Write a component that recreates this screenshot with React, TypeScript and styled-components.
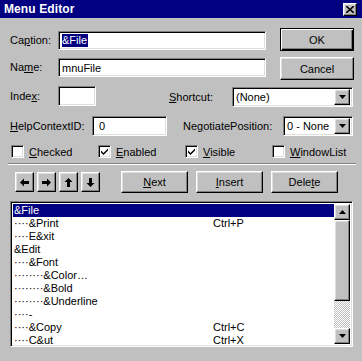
import React from 'react';
import styled, { createGlobalStyle, css } from 'styled-components';

const Global = createGlobalStyle`
  html, body { margin: 0; padding: 0; background: #c0c0c0; }
  body { font-family: "Liberation Sans", Arial, sans-serif; font-size: 11px; color: #000; }
  * { box-sizing: border-box; }
`;

const Win = styled.div`
  width: 362px;
  height: 361px;
  background: #c0c0c0;
  display: flex;
  flex-direction: column;
  overflow: hidden;
`;

const TitleBar = styled.div`
  height: 18px;
  flex: 0 0 18px;
  background: #000080;
  display: flex;
  align-items: center;
  justify-content: space-between;
  padding: 0 5px 0 4px;
`;

const Title = styled.span`
  color: #fff;
  font-weight: bold;
  font-size: 12px;
  letter-spacing: 0.1px;
`;

const raised = css`
  background: #c0c0c0;
  border: 1px solid;
  border-color: #fff #000 #000 #fff;
  box-shadow: inset -1px -1px #808080, inset 1px 1px #dfdfdf;
`;

const sunken = css`
  background: #fff;
  border: 1px solid;
  border-color: #808080 #fff #fff #808080;
  box-shadow: inset 1px 1px #000, inset -1px -1px #dfdfdf;
`;

const CloseBtn = styled.div`
  ${raised};
  width: 14px;
  height: 13px;
  display: flex;
  align-items: center;
  justify-content: center;
`;

const Row = styled.div<{ $mt: number; $h: number; $pl?: number }>`
  display: flex;
  align-items: flex-start;
  margin-top: ${p => p.$mt}px;
  height: ${p => p.$h}px;
  padding-left: ${p => p.$pl ?? 10}px;
`;

const Label = styled.div<{ $w: number; $dy?: number; $lh?: number; $ml?: number }>`
  width: ${p => p.$w}px;
  margin-top: ${p => p.$dy ?? 0}px;
  margin-left: ${p => p.$ml ?? 0}px;
  line-height: ${p => p.$lh ?? 20}px;
  white-space: nowrap;
`;

const Key = styled.span`
  text-decoration: underline;
  text-underline-offset: 1px;
`;

const TextBox = styled.div<{ $w: number; $h?: number; $dy?: number }>`
  ${sunken};
  width: ${p => p.$w}px;
  height: ${p => p.$h ?? 20}px;
  margin-top: ${p => p.$dy ?? 0}px;
  display: flex;
  align-items: center;
  padding: 0 3px;
  white-space: nowrap;
`;

const Sel = styled.span`
  background: #000080;
  color: #fff;
  padding: 0 1px 1px 0;
`;

const Combo = styled.div<{ $w: number; $dy?: number }>`
  ${sunken};
  width: ${p => p.$w}px;
  height: 20px;
  margin-top: ${p => p.$dy ?? 0}px;
  display: flex;
  align-items: center;
  padding: 2px 2px 2px 3px;
`;

const ComboText = styled.div`
  flex: 1;
  white-space: nowrap;
`;

const ArrowBtn = styled.div<{ $h?: number }>`
  ${raised};
  width: 16px;
  height: ${p => p.$h ?? 16}px;
  flex: 0 0 auto;
  display: flex;
  align-items: center;
  justify-content: center;
`;

const Button = styled.div<{ $w: number; $h: number; $ml?: number; $default?: boolean }>`
  ${raised};
  width: ${p => p.$w}px;
  height: ${p => p.$h}px;
  margin-left: ${p => p.$ml ?? 0}px;
  display: flex;
  align-items: center;
  justify-content: center;
  ${p =>
    p.$default &&
    css`
      border-color: #000;
      box-shadow: inset 1px 1px #fff, inset -1px -1px #000, inset -2px -2px #808080;
    `}
`;

const MoveGroup = styled.div`
  display: flex;
  gap: 3px;
  align-items: center;
  height: 22px;
  margin-right: 21px;
`;

const MoveBtn = styled.div`
  ${raised};
  width: 19px;
  height: 20px;
  display: flex;
  align-items: center;
  justify-content: center;
`;

const CheckItem = styled.div`
  width: 87px;
  display: flex;
  align-items: center;
  gap: 5px;
  height: 13px;
  white-space: nowrap;
`;

const CheckBox = styled.div`
  ${sunken};
  width: 13px;
  height: 13px;
  display: flex;
  align-items: center;
  justify-content: center;
`;

const Separator = styled.div`
  margin: 5px 6px 0 8px;
  border-top: 1px solid #808080;
  border-bottom: 1px solid #fff;
  height: 2px;
`;

const ListBox = styled.div`
  ${sunken};
  margin: 8px 0 0 10px;
  width: 343px;
  height: 146px;
  padding: 2px;
  display: flex;
`;

const Items = styled.div`
  flex: 1;
  display: flex;
  flex-direction: column;
`;

const Item = styled.div<{ $sel?: boolean }>`
  display: grid;
  grid-template-columns: 199px 1fr;
  flex: 0 0 12.9px;
  line-height: 13px;
  padding-left: 1px;
  white-space: nowrap;
  background: ${p => (p.$sel ? '#000080' : 'transparent')};
  color: ${p => (p.$sel ? '#fff' : '#000')};
`;

const ScrollBar = styled.div`
  width: 16px;
  display: flex;
  flex-direction: column;
`;

const Thumb = styled.div`
  ${raised};
  height: 81px;
`;

const Track = styled.div`
  flex: 1;
  background-color: #c0c0c0;
  background-image: conic-gradient(#fff 25%, #c0c0c0 0 50%, #fff 0 75%, #c0c0c0 0);
  background-size: 2px 2px;
`;

const Tri = ({ up }: { up?: boolean }) => (
  <svg width="7" height="4" viewBox="0 0 7 4">
    <polygon points={up ? '0,4 7,4 3.5,0' : '0,0 7,0 3.5,4'} fill="#000" />
  </svg>
);

const Arrow = ({ dir }: { dir: 'l' | 'r' | 'u' | 'd' }) => {
  const paths: Record<string, string> = {
    l: 'M0 4.5 L4 0.5 V3 H9 V6 H4 V8.5 Z',
    r: 'M9 4.5 L5 0.5 V3 H0 V6 H5 V8.5 Z',
    u: 'M4.5 0 L8.5 4 H6 V9 H3 V4 H0.5 Z',
    d: 'M4.5 9 L8.5 5 H6 V0 H3 V5 H0.5 Z',
  };
  return (
    <svg width="9" height="9" viewBox="0 0 9 9">
      <path d={paths[dir]} fill="#000" />
    </svg>
  );
};

const Check = () => (
  <svg width="9" height="9" viewBox="0 0 9 9">
    <path d="M1 3.5 L3.5 6 L8 1.5 V3.5 L3.5 8 L1 5.5 Z" fill="#000" />
  </svg>
);

const CheckField = ({ checked, children }: { checked?: boolean; children: React.ReactNode }) => (
  <CheckItem>
    <CheckBox>{checked && <Check />}</CheckBox>
    <span>{children}</span>
  </CheckItem>
);

const items: { text: string; sc?: string; sel?: boolean }[] = [
  { text: '&File', sel: true },
  { text: '····&Print', sc: 'Ctrl+P' },
  { text: '····E&xit' },
  { text: '&Edit' },
  { text: '····&Font' },
  { text: '········&Color…' },
  { text: '········&Bold' },
  { text: '········&Underline' },
  { text: '····-' },
  { text: '····&Copy', sc: 'Ctrl+C' },
  { text: '····C&ut', sc: 'Ctrl+X' },
];

export default function App() {
  return (
    <>
      <Global />
      <Win>
        <TitleBar>
          <Title>Menu Editor</Title>
          <CloseBtn>
            <svg width="8" height="7" viewBox="0 0 8 7">
              <path d="M0 0 L8 7 M8 0 L0 7" stroke="#000" strokeWidth="1.6" />
            </svg>
          </CloseBtn>
        </TitleBar>

        <Row $mt={10} $h={23}>
          <Label $w={48} $dy={3} $lh={19}>
            Ca<Key>p</Key>tion:
          </Label>
          <TextBox $w={208} $h={19} $dy={3}>
            <Sel>&amp;File</Sel>
          </TextBox>
          <Button $w={74} $h={23} $ml={14} $default>
            OK
          </Button>
        </Row>

        <Row $mt={6} $h={23}>
          <Label $w={48} $dy={1} $lh={19}>
            Na<Key>m</Key>e:
          </Label>
          <TextBox $w={208} $h={19} $dy={1}>
            mnuFile
          </TextBox>
          <Button $w={74} $h={23} $ml={14}>
            Cancel
          </Button>
        </Row>

        <Row $mt={6} $h={21}>
          <Label $w={48}>
            Inde<Key>x</Key>:
          </Label>
          <TextBox $w={38} />
          <Label $w={63} $ml={73} $dy={1}>
            <Key>S</Key>hortcut:
          </Label>
          <Combo $w={121} $dy={1}>
            <ComboText>(None)</ComboText>
            <ArrowBtn>
              <Tri />
            </ArrowBtn>
          </Combo>
        </Row>

        <Row $mt={9} $h={20}>
          <Label $w={82}>
            <Key>H</Key>elpContextID:
          </Label>
          <TextBox $w={75}>&nbsp;0</TextBox>
          <Label $w={100} $ml={16}>
            Ne<Key>g</Key>otiatePosition:
          </Label>
          <Combo $w={70}>
            <ComboText>0 - None</ComboText>
            <ArrowBtn>
              <Tri />
            </ArrowBtn>
          </Combo>
        </Row>

        <Row $mt={9} $h={13} $pl={11}>
          <CheckField>
            <Key>C</Key>hecked
          </CheckField>
          <CheckField checked>
            <Key>E</Key>nabled
          </CheckField>
          <CheckField checked>
            <Key>V</Key>isible
          </CheckField>
          <CheckField>
            <Key>W</Key>indowList
          </CheckField>
        </Row>

        <Separator />

        <Row $mt={6} $h={22} $pl={15}>
          <MoveGroup>
            <MoveBtn>
              <Arrow dir="l" />
            </MoveBtn>
            <MoveBtn>
              <Arrow dir="r" />
            </MoveBtn>
            <MoveBtn>
              <Arrow dir="u" />
            </MoveBtn>
            <MoveBtn>
              <Arrow dir="d" />
            </MoveBtn>
          </MoveGroup>
          <Button $w={67} $h={22}>
            <Key>N</Key>ext
          </Button>
          <Button $w={67} $h={22} $ml={8}>
            <Key>I</Key>nsert
          </Button>
          <Button $w={67} $h={22} $ml={8}>
            Dele<Key>t</Key>e
          </Button>
        </Row>

        <ListBox>
          <Items>
            {items.map((it, i) => (
              <Item key={i} $sel={it.sel}>
                <span>{it.text}</span>
                <span>{it.sc ?? ''}</span>
              </Item>
            ))}
          </Items>
          <ScrollBar>
            <ArrowBtn>
              <Tri up />
            </ArrowBtn>
            <Thumb />
            <Track />
            <ArrowBtn>
              <Tri />
            </ArrowBtn>
          </ScrollBar>
        </ListBox>
      </Win>
    </>
  );
}
